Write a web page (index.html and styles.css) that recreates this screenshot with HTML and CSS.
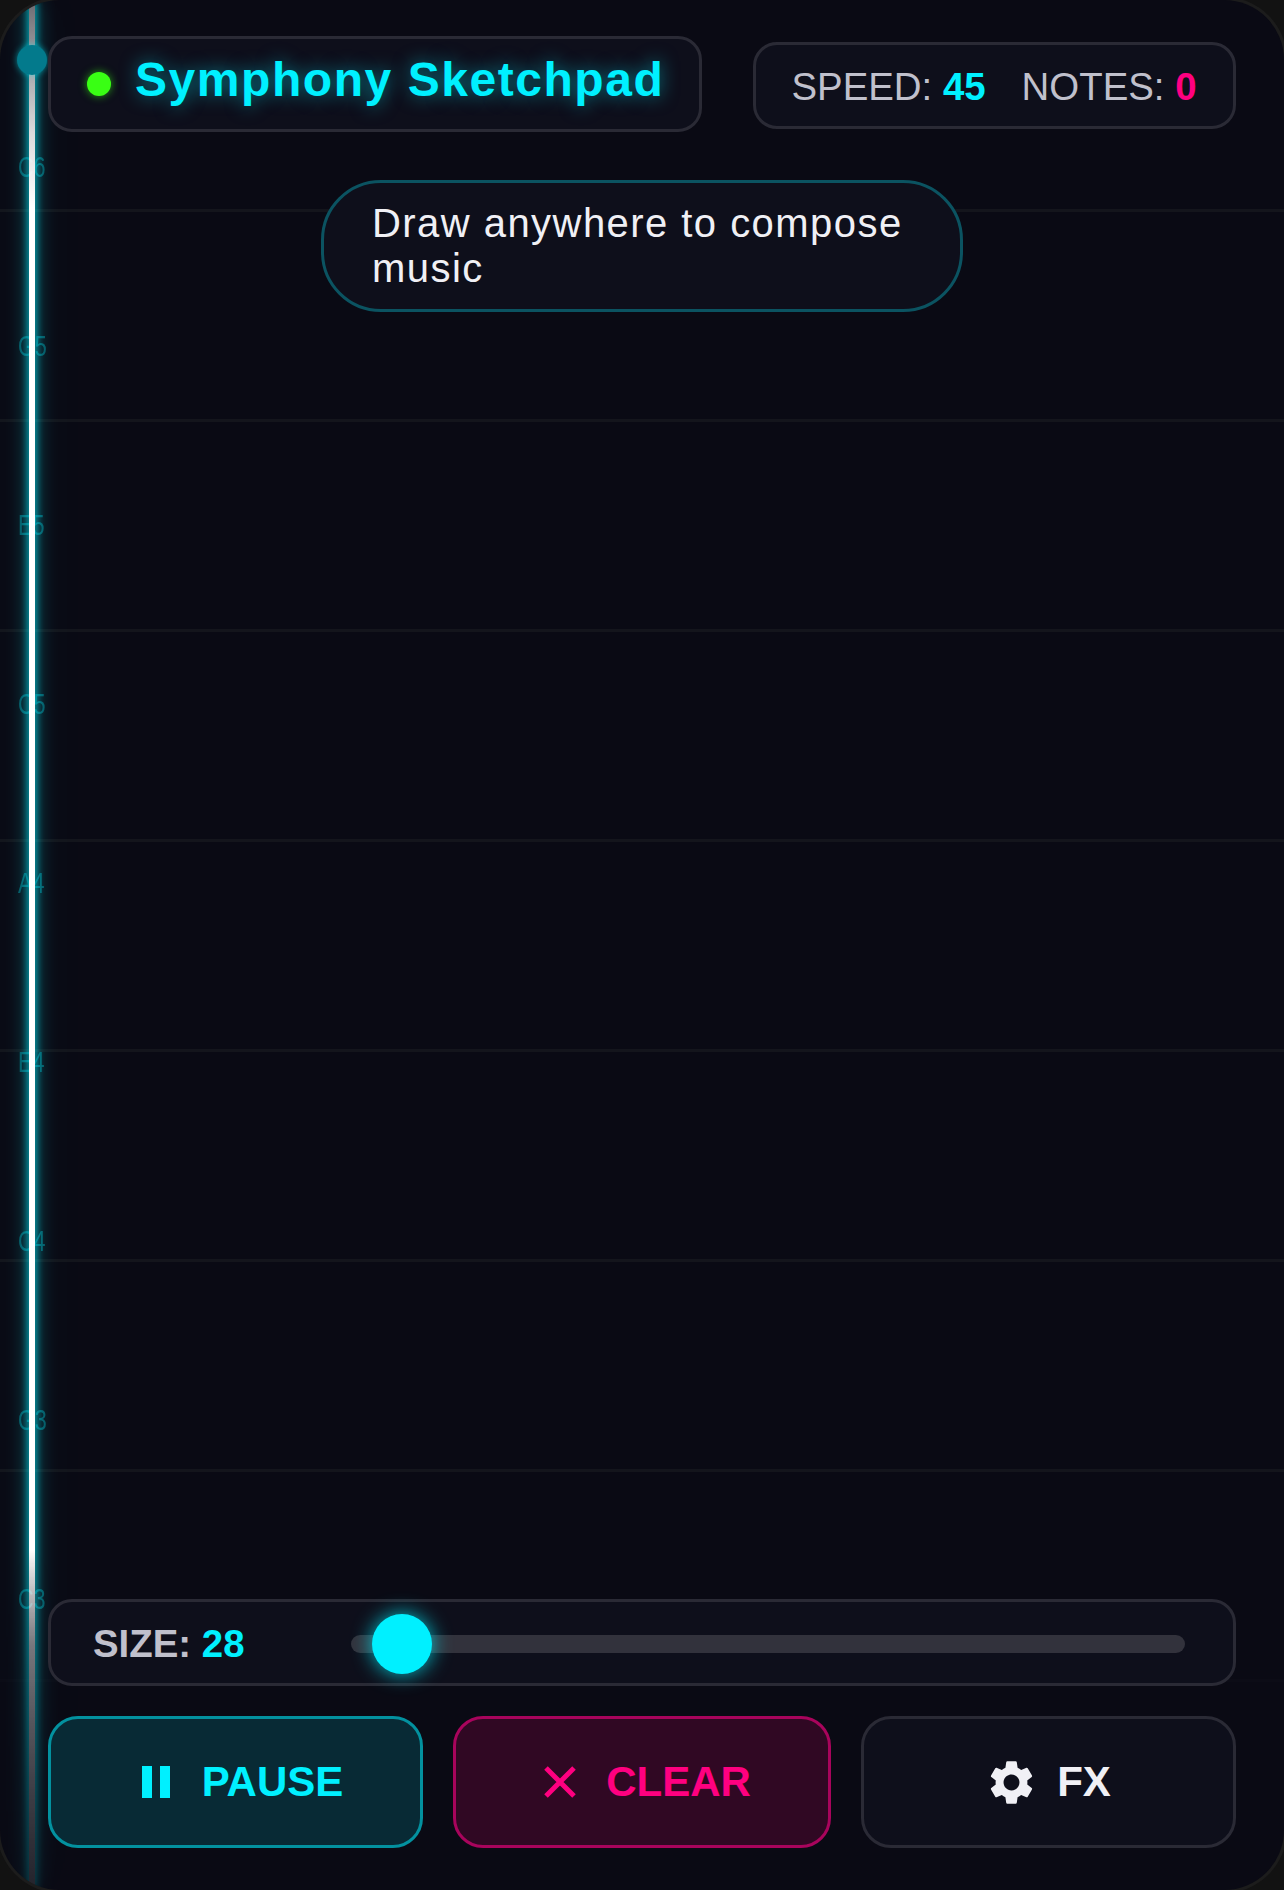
FILE: index.html
```html
<!DOCTYPE html>
<html lang="en">
<head>
    <meta charset="UTF-8">
    <meta name="viewport" content="width=device-width, initial-scale=1.0">
    <title>Symphony Sketchpad</title>
    <link rel="stylesheet" href="styles.css">
</head>
<body>
    <div class="app">
        <!-- staff lines and note names sit behind everything -->
        <div class="staff-lines">
            <div class="staff-line"></div>
            <div class="staff-line"></div>
            <div class="staff-line"></div>
            <div class="staff-line"></div>
            <div class="staff-line"></div>
            <div class="staff-line"></div>
            <div class="staff-line"></div>
            <div class="staff-line"></div>
        </div>
        <div class="note-names">
            <span>C6</span>
            <span>G5</span>
            <span>E5</span>
            <span>C5</span>
            <span>A4</span>
            <span>E4</span>
            <span>C4</span>
            <span>G3</span>
            <span>C3</span>
        </div>
        <div class="playhead">
            <div class="playhead-line"></div>
            <div class="playhead-dot"></div>
        </div>

        <header class="top-bar">
            <div class="panel title-box">
                <span class="status-dot"></span>
                <h1>Symphony Sketchpad</h1>
            </div>
            <div class="panel stats-box">
                <span>SPEED: <b class="cyan">45</b></span>
                <span>NOTES: <b class="pink">0</b></span>
            </div>
        </header>

        <p class="hint">Draw anywhere to compose music</p>

        <div class="panel size-row">
            <div class="size-label">SIZE: <span class="cyan">28</span></div>
            <div class="track"><div class="thumb"></div></div>
        </div>

        <div class="buttons">
            <button class="btn btn-pause">
                <svg class="icon" viewBox="0 0 28 32"><rect x="0" y="0" width="10" height="32"/><rect x="18" y="0" width="10" height="32"/></svg>
                PAUSE
            </button>
            <button class="btn btn-clear">
                <svg class="icon" viewBox="0 0 32 32"><path d="M2 2 30 30M30 2 2 30"/></svg>
                CLEAR
            </button>
            <button class="btn btn-fx">
                <svg class="icon-gear" viewBox="0 0 24 24"><path d="M19.14 12.94c.04-.3.06-.61.06-.94 0-.32-.02-.64-.07-.94l2.03-1.58c.18-.14.23-.41.12-.61l-1.92-3.32c-.12-.22-.37-.29-.59-.22l-2.39.96c-.5-.38-1.03-.7-1.62-.94l-.36-2.54c-.04-.24-.24-.41-.48-.41h-3.84c-.24 0-.43.17-.47.41l-.36 2.54c-.59.24-1.13.57-1.62.94l-2.39-.96c-.22-.08-.47 0-.59.22L2.74 8.87c-.12.21-.08.47.12.61l2.03 1.58c-.05.3-.09.63-.09.94s.02.64.07.94l-2.03 1.58c-.18.14-.23.41-.12.61l1.92 3.32c.12.22.37.29.59.22l2.39-.96c.5.38 1.03.7 1.62.94l.36 2.54c.05.24.24.41.48.41h3.84c.24 0 .44-.17.47-.41l.36-2.54c.59-.24 1.13-.56 1.62-.94l2.39.96c.22.08.47 0 .59-.22l1.92-3.32c.12-.22.07-.47-.12-.61l-2.01-1.58zM12 15.6c-1.98 0-3.6-1.62-3.6-3.6s1.62-3.6 3.6-3.6 3.6 1.62 3.6 3.6-1.62 3.6-3.6 3.6z"/></svg>
                FX
            </button>
        </div>
    </div>
</body>
</html>
```

FILE: styles.css
```css
* {
    box-sizing: border-box;
}
html, body {
    margin: 0;
    height: 100%;
    background: #121212;
}
body {
    font-family: "Liberation Sans", Arial, sans-serif;
}
.app {
    position: relative;
    height: 1890px;
    display: flex;
    flex-direction: column;
    padding: 36px 48px 42px;
    background: #0a0a14;
    border-radius: 60px;
    box-shadow: 0 0 0 3px #1c1c1c;
    overflow: hidden;
}
.staff-lines {
    position: absolute;
    top: 2px;
    left: 0;
    right: 0;
}
.staff-line {
    height: 210px;
    border-bottom: 3px solid #14151c;
}
.staff-line:last-child {
    border-bottom-color: #0c0c16;
}
.note-names {
    position: absolute;
    top: 143px;
    left: 18px;
    display: flex;
    flex-direction: column;
    color: rgba(0, 240, 255, 0.32);
    font-size: 30px;
    transform: scaleX(0.72);
    transform-origin: left top;
}
.note-names span {
    height: 179px;
    line-height: 48px;
}
.playhead {
    position: absolute;
    top: 0;
    bottom: 0;
    left: 0;
    width: 110px;
    -webkit-mask-image: linear-gradient(to bottom, #000 82%, rgba(0, 0, 0, 0.35) 100%);
    mask-image: linear-gradient(to bottom, #000 82%, rgba(0, 0, 0, 0.35) 100%);
}
.playhead-line {
    width: 6px;
    height: 100%;
    margin-left: 29px;
    background: linear-gradient(to bottom, rgba(255, 255, 255, 0.4) 0%, rgba(255, 255, 255, 0.6) 3%, rgba(255, 255, 255, 0.85) 7%, #fff 11%, #fff 82%, rgba(255, 255, 255, 0.55) 87%, rgba(255, 255, 255, 0.45) 92%, rgba(255, 255, 255, 0.3) 100%);
    box-shadow: 0 0 8px #00e8f8, 0 0 20px rgba(0, 240, 255, 0.6), 0 0 50px rgba(0, 240, 255, 0.2);
}
.playhead-dot {
    position: absolute;
    top: 45px;
    left: 17px;
    width: 30px;
    height: 30px;
    border-radius: 50%;
    background: #037a8c;
    box-shadow: 0 0 6px rgba(0, 240, 255, 0.5);
}
.panel {
    position: relative;
    background: #0e0f1b;
    border: 3px solid #2a2a35;
    border-radius: 24px;
}
.top-bar {
    position: relative;
    display: flex;
    justify-content: space-between;
    align-items: flex-start;
}
.title-box {
    display: flex;
    align-items: center;
    gap: 24px;
    width: 654px;
    height: 96px;
    padding: 0 36px;
}
.status-dot {
    flex: none;
    width: 24px;
    height: 24px;
    border-radius: 50%;
    background: #39ff14;
    box-shadow: 0 0 8px rgba(57, 255, 20, 0.6);
}
h1 {
    margin: 0 0 9px;
    color: #00f0ff;
    font-size: 48px;
    letter-spacing: 1.55px;
    white-space: nowrap;
    text-shadow: 0 0 18px rgba(0, 240, 255, 0.5);
}
.stats-box {
    display: flex;
    align-items: center;
    justify-content: center;
    gap: 36px;
    width: 483px;
    height: 87px;
    margin-top: 6px;
    padding: 2px 1px 0 0;
    color: #c0c0cc;
    font-size: 38.4px;
}
.cyan {
    color: #00f0ff;
}
.pink {
    color: #ff0080;
}
.hint {
    position: relative;
    align-self: center;
    width: 642px;
    height: 132px;
    margin: 48px 0 0;
    padding: 18px 48px;
    background: #0e0f1b;
    border: 3px solid #0b5361;
    border-radius: 60px;
    color: #f0f0f5;
    font-size: 40px;
    line-height: 45px;
    letter-spacing: 1.45px;
}
.size-row {
    display: flex;
    align-items: center;
    height: 87px;
    margin-top: auto;
    padding: 2px 48px 0 42px;
}
.size-label {
    flex: none;
    width: 258px;
    color: #c0c0cc;
    font-size: 38.4px;
    font-weight: bold;
}
.track {
    position: relative;
    flex: 1;
    height: 18px;
    border-radius: 9px;
    background: #32323c;
}
.thumb {
    position: absolute;
    top: -21px;
    left: 21px;
    width: 60px;
    height: 60px;
    border-radius: 50%;
    background: #00f0ff;
    box-shadow: 0 0 20px rgba(0, 240, 255, 0.8);
}
.buttons {
    position: relative;
    display: flex;
    gap: 30px;
    margin-top: 30px;
}
.btn {
    flex: 1 1 375px;
    display: flex;
    align-items: center;
    justify-content: center;
    gap: 32px;
    height: 132px;
    padding: 0;
    border: 3px solid #2a2a35;
    border-radius: 30px;
    background: #0e0f1b;
    color: #f0f0f5;
    font-family: inherit;
    font-size: 42px;
    font-weight: bold;
}
.icon {
    height: 32px;
}
.btn-pause {
    padding-left: 14px;
    background: #082a35;
    border-color: #03919f;
    color: #00f0ff;
}
.btn-pause .icon {
    width: 28px;
    fill: #00f0ff;
}
.btn-clear {
    flex-basis: 378px;
    gap: 30px;
    padding-left: 11px;
    background: #300823;
    border-color: #a8045c;
    color: #ff0080;
}
.btn-clear .icon {
    width: 32px;
    fill: none;
    stroke: #ff0080;
    stroke-width: 5;
}
.btn-fx {
    gap: 19px;
    padding-right: 1px;
}
.icon-gear {
    width: 53px;
    height: 53px;
    fill: #f0f0f5;
}
```
